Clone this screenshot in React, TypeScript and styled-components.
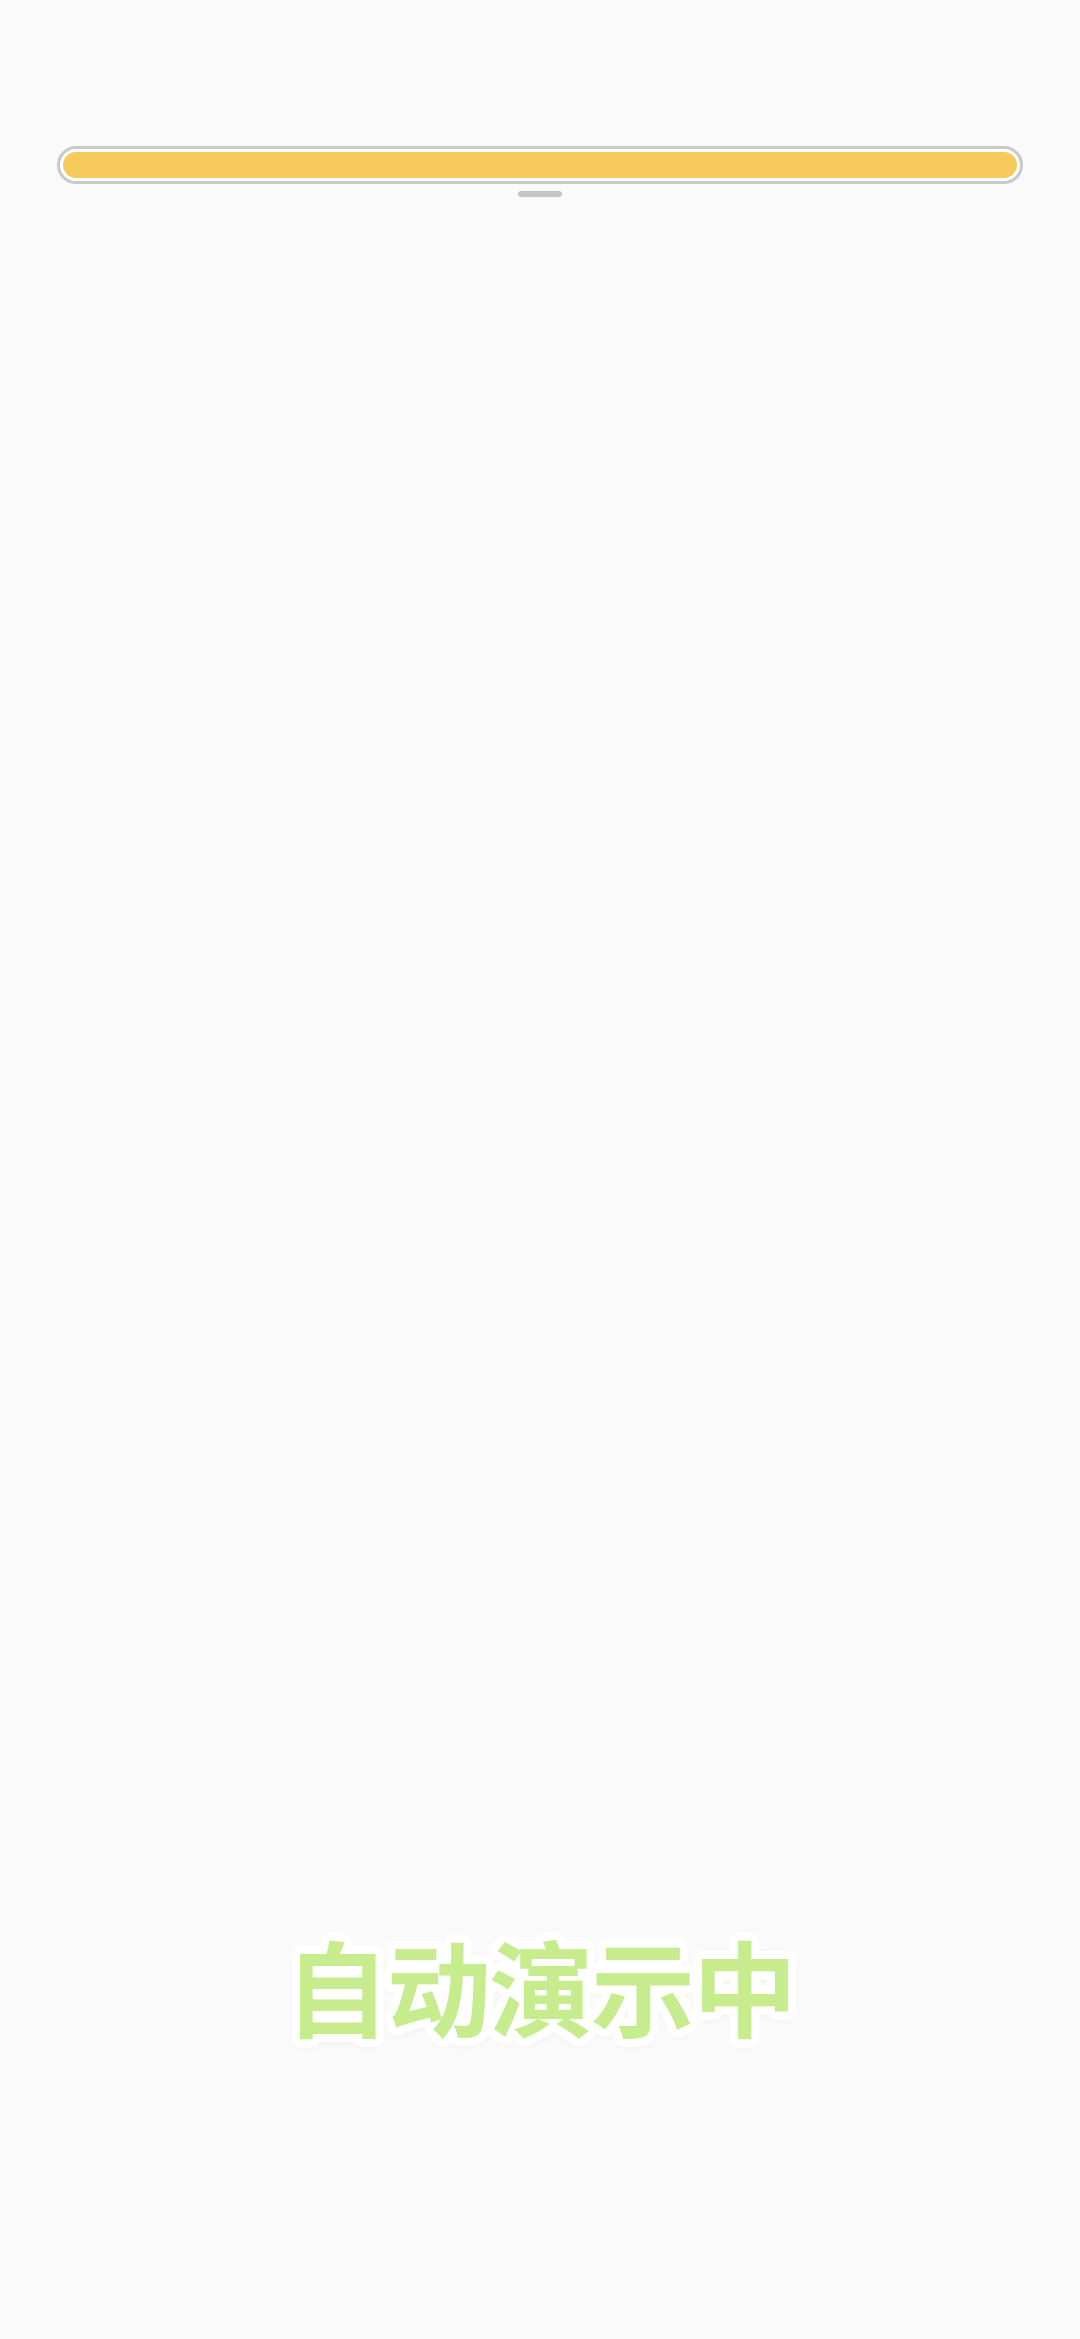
import React from "react";
import styled, { createGlobalStyle } from "styled-components";

const Global = createGlobalStyle`
  html, body { margin: 0; padding: 0; background: #fafafa; }
  body { font-family: "Noto Sans", "Noto Sans CJK SC", sans-serif; }
`;

const Page = styled.div`
  width: 1080px;
  height: 2339px;
  background: #fafafa;
  display: flex;
  flex-direction: column;
  align-items: center;
  overflow: hidden;
`;

const Track = styled.div`
  margin-top: 146px;
  width: 966px;
  height: 38px;
  box-sizing: border-box;
  border: 3px solid #c9c9cc;
  border-radius: 19px;
  background: #ffffff;
  padding: 3px;
  display: flex;
`;

const Fill = styled.div<{ $pct: number }>`
  width: ${(p) => p.$pct}%;
  height: 100%;
  border-radius: 14px;
  background: #f6ca5c;
`;

const Handle = styled.div`
  margin-top: 7px;
  width: 44px;
  height: 6px;
  border-radius: 3px;
  background: #c4c4c4;
`;

const ring = (r: number, n: number) =>
  Array.from({ length: n }, (_, i) => {
    const a = (i / n) * Math.PI * 2;
    return `${(Math.cos(a) * r).toFixed(2)}px ${(Math.sin(a) * r).toFixed(2)}px 0 #ffffff`;
  }).join(", ");

const outline = [ring(8, 32), ring(5, 20), ring(2.5, 12), "0 4px 12px rgba(0,0,0,0.14)"].join(", ");

const Caption = styled.div`
  margin-top: 1736px;
  font-family: "Noto Sans CJK SC", "Noto Sans", sans-serif;
  font-weight: 700;
  font-size: 104px;
  line-height: 1;
  color: #c6ec8e;
  text-shadow: ${outline};
  letter-spacing: -2px;
`;

export default function App() {
  return (
    <Page>
      <Global />
      <Track>
        <Fill $pct={100} />
      </Track>
      <Handle />
      <Caption>自动演示中</Caption>
    </Page>
  );
}
